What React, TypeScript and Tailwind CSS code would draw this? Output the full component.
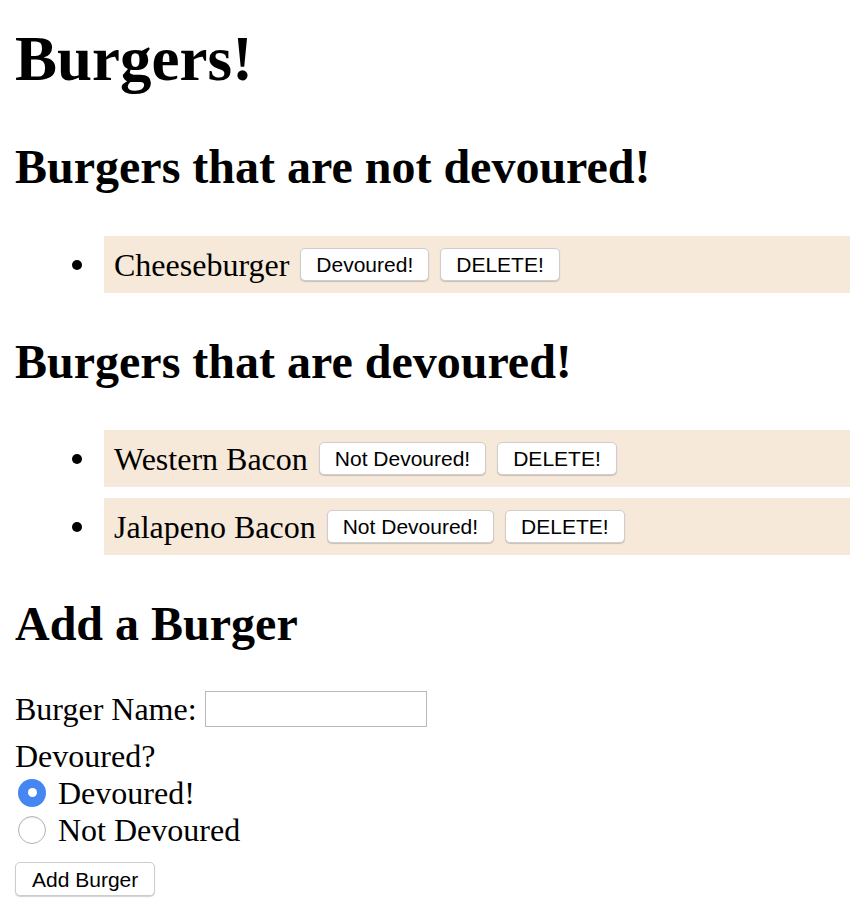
import React from "react";

const btn =
  "h-[33px] px-[15px] rounded-[5px] border border-[#cdcdcd] bg-white text-[21px] leading-none text-black shadow-[0_1px_1px_rgba(0,0,0,0.18)] font-['Liberation_Sans',Arial,sans-serif]";

const BurgerRow = ({ name, toggle }: { name: string; toggle: string }) => (
  <li className="flex items-center">
    {/* bullet */}
    <span className="flex w-[89px] pl-[57px]">
      <span className="h-[10px] w-[10px] rounded-full bg-black" />
    </span>
    <div className="flex h-[57px] flex-1 items-center gap-[11px] bg-[#f7e9d9] pl-[10px]">
      <span className="text-[32px] leading-none">{name}</span>
      <button className={btn}>{toggle}</button>
      <button className={btn}>DELETE!</button>
    </div>
  </li>
);

const Radio = ({ checked, label }: { checked?: boolean; label: string }) => (
  <label className="flex h-[37px] items-center gap-[12px] pl-[3px]">
    {checked ? (
      <span className="flex h-[28px] w-[28px] items-center justify-center rounded-full bg-[#4686f2]">
        <span className="h-[9px] w-[9px] rounded-full bg-white" />
      </span>
    ) : (
      <span className="h-[28px] w-[28px] rounded-full border border-[#b3b3b3] bg-white shadow-[inset_0_1px_1px_rgba(0,0,0,0.08)]" />
    )}
    <span className="text-[32px] leading-none">{label}</span>
  </label>
);

export default function App() {
  return (
    <div className="min-h-[922px] bg-white px-[15px] font-['Liberation_Serif',serif] text-black">
      <h1 className="pt-[28px] text-[63px] font-bold leading-[62px]">Burgers!</h1>

      <h2 className="mt-[53px] text-[48px] font-bold leading-[48px]">
        Burgers that are not devoured!
      </h2>
      <ul className="mt-[45px] -mr-[15px]">
        <BurgerRow name="Cheeseburger" toggle="Devoured!" />
      </ul>

      <h2 className="mt-[45px] text-[48px] font-bold leading-[48px]">
        Burgers that are devoured!
      </h2>
      <ul className="mt-[44px] -mr-[15px] flex flex-col gap-[11px]">
        <BurgerRow name="Western Bacon" toggle="Not Devoured!" />
        <BurgerRow name="Jalapeno Bacon" toggle="Not Devoured!" />
      </ul>

      <h2 className="mt-[45px] text-[48px] font-bold leading-[48px]">Add a Burger</h2>

      <form className="mt-[43px]">
        <div className="flex h-[36px] items-center gap-[8px]">
          <span className="text-[32px] leading-none">Burger Name:</span>
          <input type="text" className="h-[36px] w-[222px] border border-[#b9b9b9] bg-white outline-none" />
        </div>
        <div className="mt-[11px] flex h-[36px] items-center text-[32px] leading-none">Devoured?</div>
        <Radio checked label="Devoured!" />
        <Radio label="Not Devoured" />
        <button type="button" className={`${btn} mt-[14px] h-[34px] px-[16px]`}>
          Add Burger
        </button>
      </form>
    </div>
  );
}
